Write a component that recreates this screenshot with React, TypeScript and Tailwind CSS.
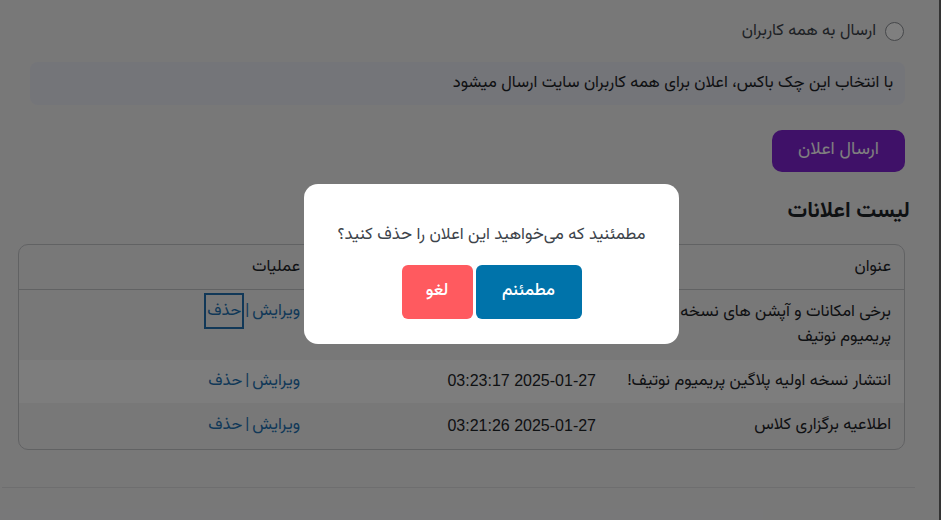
import React from "react";

type Row = {
  readonly title: string;
  readonly date: string;
  readonly focused?: boolean;
};

const ROWS: readonly Row[] = [
  {
    title: "برخی امکانات و آپشن های نسخه پرو در نسخه رایگان افزونه پریمیوم نوتیف",
    date: "2025-01-27 03:25:41",
    focused: true,
  },
  { title: "انتشار نسخه اولیه پلاگین پریمیوم نوتیف!", date: "2025-01-27 03:23:17" },
  { title: "اطلاعیه برگزاری کلاس", date: "2025-01-27 03:21:26" },
];

const FONT = { fontFamily: '"Vazirmatn", "DejaVu Sans", "Noto Sans", sans-serif' };
const DATE_FONT = { fontFamily: '"Liberation Sans", Arial, sans-serif' };

function Actions({ focused }: { readonly focused?: boolean }): React.JSX.Element {
  return (
    <span className="text-[16.5px] text-[#2271b1]">
      <a href="#" className="text-[#2271b1]">ویرایش</a>
      <span className="px-[3px]">|</span>
      <a
        href="#"
        className={focused ? "text-[#2271b1] outline-2 outline-[#2271b1] px-px py-[3px]" : "text-[#2271b1]"}
      >
        حذف
      </a>
    </span>
  );
}

export default function App(): React.JSX.Element {
  return (
    <div dir="rtl" style={FONT} className="relative h-[520px] w-[941px] overflow-hidden bg-[#f0f0f1] text-[#3c434a]">
      <div className="mr-[26px]">
        {/* ── Form ── */}
        <div className="pr-[11px] pt-[19px]">
          <label className="flex items-center gap-[9px] text-[16.5px] text-[#3c434a]">
            <span className="h-[19px] w-[19px] shrink-0 rounded-full border border-[#8c8f94] bg-white" />
            ارسال به همه کاربران
          </label>
        </div>
        <div className="mr-[10px] ml-[30px] mt-[18px] flex h-[43px] items-center rounded-[8px] bg-[#e8eaf3] px-[12px] text-[16.5px] text-[#1d2327]">
          با انتخاب این چک باکس، اعلان برای همه کاربران سایت ارسال میشود
        </div>
        <div className="mr-[10px] mt-[25px]">
          <button className="h-[42px] w-[133px] rounded-[10px] bg-[#7e22d0] text-[18px] text-white">
            ارسال اعلان
          </button>
        </div>

        {/* ── List ── */}
        <h2 className="mr-[5px] mt-[22px] text-[22px] font-bold leading-[36px] text-[#1d2327]">لیست اعلانات</h2>
        <div className="mr-[10px] ml-[18px] mt-[14px] overflow-hidden rounded-[10px] border border-[#c3c4c7]">
          <table className="w-full border-collapse text-[16.5px] text-[#1d2327]">
            <thead>
              <tr className="h-[45px] border-b border-[#c3c4c7]">
                <th className="w-[294px] pr-[13px] text-right font-normal">عنوان</th>
                <th className="w-[298px] pr-[14px] text-right font-normal">تاریخ</th>
                <th className="pr-[12px] text-right font-normal">عملیات</th>
              </tr>
            </thead>
            <tbody>
              {ROWS.map((row, i) => (
                <tr
                  key={row.date}
                  className={i === 1 ? "h-[43px] bg-[#fbfbfb]" : i === 0 ? "h-[70px]" : "h-[46px]"}
                >
                  <td className="pr-[13px] leading-[25px]">
                    {row.title.length > 60 ? (
                      <>
                        برخی امکانات و آپشن های نسخه پرو در
                        <br />
                        پریمیوم نوتیف
                      </>
                    ) : (
                      row.title
                    )}
                  </td>
                  <td style={DATE_FONT} className="pr-[14px] text-[16px]">{row.date}</td>
                  <td className={i === 0 ? "pr-[12px] pt-[9px] align-top" : "pr-[12px]"}>
                    <Actions focused={row.focused} />
                  </td>
                </tr>
              ))}
            </tbody>
          </table>
        </div>

        <div className="mt-[37px] ml-[2px] border-t border-[#dcdcde]" />
      </div>
      <div className="absolute inset-y-0 right-0 w-[2px] bg-[#666]" />

      {/* ── Overlay + confirm dialog ── */}
      <div className="absolute inset-0 flex items-start justify-center bg-black/50 pt-[184px] pl-[42px]">
        <div className="flex h-[160px] w-[375px] flex-col items-center rounded-[14px] bg-white pt-[39px]">
          <p className="text-[16.8px] text-[#3c434a]">مطمئنید که می‌خواهید این اعلان را حذف کنید؟</p>
          <div className="mt-[17px] flex gap-[3px]">
            <button className="h-[54px] w-[106px] rounded-[6px] bg-[#0073aa] text-[17px] font-medium text-white">
              مطمئنم
            </button>
            <button className="h-[54px] w-[71px] rounded-[6px] bg-[#ff5a5f] text-[17px] font-medium text-white">
              لغو
            </button>
          </div>
        </div>
      </div>
    </div>
  );
}
